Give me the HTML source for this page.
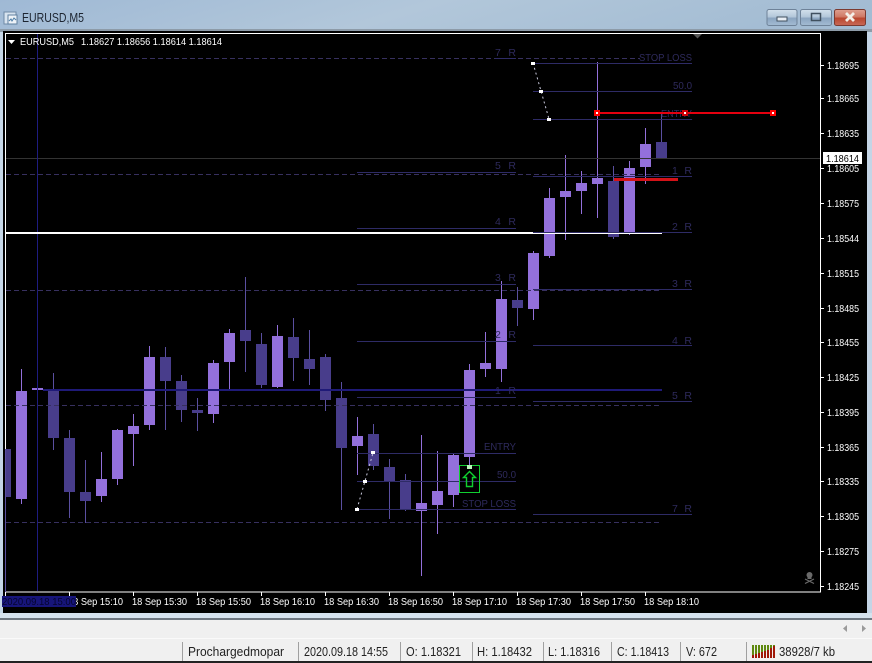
<!DOCTYPE html>
<html><head><meta charset="utf-8"><title>EURUSD,M5</title>
<style>
html,body{margin:0;padding:0;width:872px;height:663px;overflow:hidden;background:#f0f0f0}
svg{display:block;font-family:"Liberation Sans",sans-serif}
.w{fill:#fff;font-size:10.5px}
.f{fill:#2e2a5c;font-size:10.5px;text-anchor:end}
.s{fill:#222;font-size:12.5px}
</style></head><body>
<svg width="872" height="663" viewBox="0 0 872 663" xmlns="http://www.w3.org/2000/svg">
<defs>
<linearGradient id="tb" x1="0" y1="0" x2="1" y2="0.12"><stop offset="0" stop-color="#9fb9d5"/><stop offset=".5" stop-color="#b2c7da"/><stop offset="1" stop-color="#a3bcd3"/></linearGradient>
<linearGradient id="bb" x1="0" y1="0" x2="0" y2="1"><stop offset="0" stop-color="#d3e0ec"/><stop offset=".45" stop-color="#b4c8da"/><stop offset=".55" stop-color="#8ba5c0"/><stop offset="1" stop-color="#a4bcd4"/></linearGradient>
<linearGradient id="rb" x1="0" y1="0" x2="0" y2="1"><stop offset="0" stop-color="#dfa090"/><stop offset=".45" stop-color="#cf7a66"/><stop offset=".55" stop-color="#b9472f"/><stop offset="1" stop-color="#c96a58"/></linearGradient>
</defs>
<rect width="872" height="663" fill="#f0f0f0"/>
<rect width="872" height="32" fill="url(#tb)"/>
<rect y="29" width="872" height="3" fill="#8d9ba8"/>
<rect y="32" width="872" height="587" fill="#c4d5e6"/>
<rect x="3" y="31" width="864" height="582" fill="#000"/>
<rect x="0" y="613" width="872" height="5" fill="#d5e2ee"/>
<rect x="0" y="618" width="872" height="2" fill="#6d7680"/>
<rect x="0" y="620" width="872" height="19" fill="#f0f0f0"/>
<rect x="0" y="638" width="872" height="1" fill="#fafafa"/>
<rect x="0" y="661" width="872" height="2" fill="#222"/>

<!-- title icon -->
<g>
<rect x="4" y="12" width="12" height="12" fill="#d8e4f0" stroke="#6f8aa6"/>
<rect x="8" y="15" width="9" height="9" fill="#eef3f8" stroke="#5f7f9f"/>
<path d="M9 21l2-2 1 2 2-3 2 2" fill="none" stroke="#4f7fa8"/>
</g>
<text x="22" y="22" font-size="12.5" fill="#1c2430" textLength="62" lengthAdjust="spacingAndGlyphs">EURUSD,M5</text>

<!-- window buttons -->
<rect x="767" y="9.500" width="30" height="16" rx="2" fill="url(#bb)" stroke="#6e8298"/>
<rect x="777" y="17" width="10" height="4" fill="#e8eef4" stroke="#40505f"/>
<rect x="800.500" y="9.500" width="31" height="16" rx="2" fill="url(#bb)" stroke="#6e8298"/>
<rect x="811.500" y="13.500" width="9" height="7" fill="none" stroke="#40505f" stroke-width="1.500"/>
<rect x="834.500" y="9.500" width="31" height="16" rx="2" fill="url(#rb)" stroke="#7c3a30"/>
<path d="M846 13l8 8M854 13l-8 8" stroke="#f4efe8" stroke-width="2.800"/>

<!-- chart frame -->
<path d="M5.500 592V33.500H820.500V592H5" fill="none" stroke="#fff" shape-rendering="crispEdges"/>

<!-- wicks light -->
<path shape-rendering="crispEdges" fill="none" stroke="#9370db" d="M21.500 369V504M37.500 388V391M101.500 452V502M117.500 429V485M133.500 414V466M149.500 346V430M213.500 360V423M229.500 329V390M277.500 325V388M357.500 417V475M421.500 435V576M437.500 451V534M453.500 453V507M469.500 364V465M485.500 332V377M501.500 281V382M533.500 251V320M549.500 188V258M565.500 155V240M581.500 171V214M597.500 62V218M629.500 161V235M645.500 128V184"/>
<!-- wicks dark -->
<path shape-rendering="crispEdges" fill="none" stroke="#5a4fa0" d="M5.500 449V592M53.500 373V450M69.500 430V518M85.500 460V523M165.500 347V430M181.500 375V422M197.500 398V431M245.500 277V372M261.500 333V388M293.500 318V381M309.500 330V385M325.500 354V411M341.500 382V510M373.500 424V470M389.500 459V519M405.500 474V511M517.500 287V326M613.500 166V239M661.500 112V159"/>
<!-- bodies dark -->
<path shape-rendering="crispEdges" fill="#483d8b" d="M6 449h5v48h-5zM48 391h11v47h-11zM64 438h11v54h-11zM80 492h11v9h-11zM160 357h11v24h-11zM176 381h11v29h-11zM192 410h11v3h-11zM240 330h11v11h-11zM256 344h11v41h-11zM288 337h11v21h-11zM304 359h11v10h-11zM320 357h11v43h-11zM336 398h11v50h-11zM368 434h11v32h-11zM384 467h11v15h-11zM400 480h11v29h-11zM512 300h11v8h-11zM608 181h11v56h-11zM656 142h11v17h-11z"/>
<!-- bodies light -->
<path shape-rendering="crispEdges" fill="#9370db" d="M16 391h11v108h-11zM32 388h11v2h-11zM96 479h11v17h-11zM112 430h11v49h-11zM128 426h11v8h-11zM144 357h11v68h-11zM208 363h11v51h-11zM224 333h11v29h-11zM272 336h11v51h-11zM352 436h11v10h-11zM416 503h11v8h-11zM432 491h11v14h-11zM448 455h11v40h-11zM464 370h11v87h-11zM480 363h11v6h-11zM496 299h11v70h-11zM528 253h11v56h-11zM544 198h11v58h-11zM560 191h11v6h-11zM576 183h11v8h-11zM592 178h11v6h-11zM624 168h11v66h-11zM640 144h11v23h-11z"/>

<!-- dashed horizontals -->
<g fill="none" stroke="#37305f" stroke-dasharray="5 3" shape-rendering="crispEdges">
<path d="M6 58.500H640"/>
<path d="M6 174.500H662"/>
<path d="M6 290.500H662"/>
<path d="M6 405.500H662"/>
<path d="M6 522.500H662"/>
</g>
<!-- current price line -->
<path d="M6 158.500H820" stroke="#333333" shape-rendering="crispEdges"/>
<!-- vertical crosshair + blue line -->
<path d="M37.500 34V591" stroke="#1e1c80" shape-rendering="crispEdges"/>
<rect x="43" y="389" width="619" height="2" fill="#1f1a78"/>
<!-- white line -->
<rect x="6" y="232" width="656" height="2" fill="#fff"/>

<!-- fib left -->
<path fill="none" stroke="#2e2b66" shape-rendering="crispEdges" d="M357 172.500H516M357 228.500H516M357 284.500H516M357 341.500H516M357 397.500H516M357 453.500H516M357 481.500H516M357 509.500H516M495 58.500H516"/>
<!-- fib right -->
<path fill="none" stroke="#2e2b66" shape-rendering="crispEdges" d="M533 63.500H692M533 91.500H692M533 119.500H692M533 176.500H692M533 232.500H692M533 289.500H692M533 345.500H692M533 401.500H692M533 514.500H692"/>
<g class="labels">
<text class="f" x="516" y="56" textLength="21" lengthAdjust="spacing">7  R</text>
<text class="f" x="516" y="169" textLength="21" lengthAdjust="spacing">5  R</text>
<text class="f" x="516" y="225" textLength="21" lengthAdjust="spacing">4  R</text>
<text class="f" x="516" y="281" textLength="21" lengthAdjust="spacing">3  R</text>
<text class="f" x="516" y="338" textLength="21" lengthAdjust="spacing">2  R</text>
<text class="f" x="516" y="394" textLength="21" lengthAdjust="spacing">1  R</text>
<text class="f" x="516" y="450" textLength="32" lengthAdjust="spacingAndGlyphs">ENTRY</text>
<text class="f" x="516" y="478" textLength="19" lengthAdjust="spacingAndGlyphs">50.0</text>
<text class="f" x="516" y="507" textLength="54" lengthAdjust="spacingAndGlyphs">STOP LOSS</text>
<text class="f" x="692" y="61" textLength="53" lengthAdjust="spacingAndGlyphs">STOP LOSS</text>
<text class="f" x="692" y="89" textLength="19" lengthAdjust="spacingAndGlyphs">50.0</text>
<text class="f" x="692" y="117" textLength="31" lengthAdjust="spacingAndGlyphs">ENTRY</text>
<text class="f" x="692" y="174" textLength="20" lengthAdjust="spacing">1  R</text>
<text class="f" x="692" y="230" textLength="20" lengthAdjust="spacing">2  R</text>
<text class="f" x="692" y="287" textLength="20" lengthAdjust="spacing">3  R</text>
<text class="f" x="692" y="344" textLength="20" lengthAdjust="spacing">4  R</text>
<text class="f" x="692" y="399" textLength="20" lengthAdjust="spacing">5  R</text>
<text class="f" x="692" y="512" textLength="20" lengthAdjust="spacing">7  R</text>
</g>

<!-- dotted trend lines -->
<path d="M357 509L373 453M533 63L549 119" stroke="#c8c8dc" stroke-dasharray="2 3" fill="none"/>
<g fill="#fff" shape-rendering="crispEdges">
<rect x="355" y="508" width="4" height="3"/><rect x="363" y="480" width="4" height="3"/><rect x="371" y="451" width="4" height="3"/>
<rect x="531" y="62" width="4" height="3"/><rect x="539" y="90" width="4" height="3"/><rect x="547" y="118" width="4" height="3"/>
</g>

<!-- red lines -->
<rect x="597" y="112" width="176" height="2" fill="#e4000f"/>
<rect x="614" y="178" width="64" height="3" fill="#d31218"/>
<g shape-rendering="crispEdges">
<rect x="594" y="110" width="6" height="6" fill="#f00"/><rect x="596" y="112" width="2" height="2" fill="#fff"/>
<rect x="682" y="110" width="6" height="6" fill="#d0000a"/><rect x="684" y="112" width="2" height="2" fill="#fff"/>
<rect x="770" y="110" width="6" height="6" fill="#f00"/><rect x="772" y="112" width="2" height="2" fill="#fff"/>
</g>

<!-- buy arrow -->
<rect x="459.500" y="465.500" width="20" height="27" fill="none" stroke="#10d030" stroke-width="1.400" shape-rendering="crispEdges"/>
<path d="M469.500 471.500L475.500 477.500H472.500V486.500H466.500V477.500H463.500Z" fill="none" stroke="#10d030" stroke-width="1.400"/>
<rect x="467" y="465" width="5" height="4" fill="#b8f8b8"/>

<!-- legend -->
<path d="M8 40h7l-3.500 4z" fill="#fff"/>
<text class="w" x="20" y="45" textLength="54" lengthAdjust="spacingAndGlyphs">EURUSD,M5</text>
<text class="w" x="81" y="45" textLength="141" lengthAdjust="spacingAndGlyphs">1.18627 1.18656 1.18614 1.18614</text>

<!-- small triangle -->
<path d="M693 34h9l-4.500 4.500z" fill="#555"/>

<!-- price axis -->
<path stroke="#fff" shape-rendering="crispEdges" d="M821 65.500h3M821 98.500h3M821 133.500h3M821 168.500h3M821 203.500h3M821 238.500h3M821 273.500h3M821 308.500h3M821 342.500h3M821 377.500h3M821 412.500h3M821 447.500h3M821 481.500h3M821 516.500h3M821 551.500h3M821 586.500h3"/>
<g class="w">
<text x="827" y="69" textLength="32" lengthAdjust="spacingAndGlyphs">1.18695</text>
<text x="827" y="102" textLength="32" lengthAdjust="spacingAndGlyphs">1.18665</text>
<text x="827" y="137" textLength="32" lengthAdjust="spacingAndGlyphs">1.18635</text>
<text x="827" y="172" textLength="32" lengthAdjust="spacingAndGlyphs">1.18605</text>
<text x="827" y="207" textLength="32" lengthAdjust="spacingAndGlyphs">1.18575</text>
<text x="827" y="242" textLength="32" lengthAdjust="spacingAndGlyphs">1.18544</text>
<text x="827" y="277" textLength="32" lengthAdjust="spacingAndGlyphs">1.18515</text>
<text x="827" y="312" textLength="32" lengthAdjust="spacingAndGlyphs">1.18485</text>
<text x="827" y="346" textLength="32" lengthAdjust="spacingAndGlyphs">1.18455</text>
<text x="827" y="381" textLength="32" lengthAdjust="spacingAndGlyphs">1.18425</text>
<text x="827" y="416" textLength="32" lengthAdjust="spacingAndGlyphs">1.18395</text>
<text x="827" y="451" textLength="32" lengthAdjust="spacingAndGlyphs">1.18365</text>
<text x="827" y="485" textLength="32" lengthAdjust="spacingAndGlyphs">1.18335</text>
<text x="827" y="520" textLength="32" lengthAdjust="spacingAndGlyphs">1.18305</text>
<text x="827" y="555" textLength="32" lengthAdjust="spacingAndGlyphs">1.18275</text>
<text x="827" y="590" textLength="32" lengthAdjust="spacingAndGlyphs">1.18245</text>
</g>
<rect x="823" y="152" width="39" height="12" fill="#fff"/>
<text x="826" y="162" font-size="10.5" fill="#000" textLength="33" lengthAdjust="spacingAndGlyphs">1.18614</text>

<!-- time axis -->
<path stroke="#fff" shape-rendering="crispEdges" d="M5.500 592v4M69.500 592v4M133.500 592v4M197.500 592v4M261.500 592v4M325.500 592v4M389.500 592v4M453.500 592v4M517.500 592v4M581.500 592v4M645.500 592v4"/>
<g class="w">
<text x="68" y="605" textLength="55" lengthAdjust="spacingAndGlyphs">18 Sep 15:10</text>
<text x="132" y="605" textLength="55" lengthAdjust="spacingAndGlyphs">18 Sep 15:30</text>
<text x="196" y="605" textLength="55" lengthAdjust="spacingAndGlyphs">18 Sep 15:50</text>
<text x="260" y="605" textLength="55" lengthAdjust="spacingAndGlyphs">18 Sep 16:10</text>
<text x="324" y="605" textLength="55" lengthAdjust="spacingAndGlyphs">18 Sep 16:30</text>
<text x="388" y="605" textLength="55" lengthAdjust="spacingAndGlyphs">18 Sep 16:50</text>
<text x="452" y="605" textLength="55" lengthAdjust="spacingAndGlyphs">18 Sep 17:10</text>
<text x="516" y="605" textLength="55" lengthAdjust="spacingAndGlyphs">18 Sep 17:30</text>
<text x="580" y="605" textLength="55" lengthAdjust="spacingAndGlyphs">18 Sep 17:50</text>
<text x="644" y="605" textLength="55" lengthAdjust="spacingAndGlyphs">18 Sep 18:10</text>
</g>
<rect x="2" y="596" width="74" height="11" fill="#17157a"/>
<text x="2" y="605" font-size="10.5" fill="#050530" textLength="74" lengthAdjust="spacingAndGlyphs">2020.09.18 15:00</text>

<!-- skull -->
<g fill="#6a6a6a">
<circle cx="809.500" cy="575" r="3"/>
<rect x="807.500" y="577" width="4" height="2"/>
<path d="M805 579l9 4.500M814 579l-9 4.500" stroke="#6a6a6a" stroke-width="1.200"/>
</g>

<!-- scroll arrows -->
<path d="M847 625v7l-4-3.500z" fill="#9a9a9a"/>
<path d="M862 625v7l4-3.500z" fill="#9a9a9a"/>

<!-- status bar -->
<path stroke="#a0a0a0" shape-rendering="crispEdges" d="M182.500 642v19M298.500 642v19M400.500 642v19M472.500 642v19M543.500 642v19M611.500 642v19M680.500 642v19M746.500 642v19"/>
<g class="s">
<text x="188" y="656" textLength="96" lengthAdjust="spacingAndGlyphs">Prochargedmopar</text>
<text x="304" y="656" textLength="84" lengthAdjust="spacingAndGlyphs">2020.09.18 14:55</text>
<text x="406" y="656" textLength="55" lengthAdjust="spacingAndGlyphs">O: 1.18321</text>
<text x="477" y="656" textLength="55" lengthAdjust="spacingAndGlyphs">H: 1.18432</text>
<text x="548" y="656" textLength="52" lengthAdjust="spacingAndGlyphs">L: 1.18316</text>
<text x="617" y="656" textLength="52" lengthAdjust="spacingAndGlyphs">C: 1.18413</text>
<text x="686" y="656" textLength="31" lengthAdjust="spacingAndGlyphs">V: 672</text>
<text x="779" y="656" textLength="56" lengthAdjust="spacingAndGlyphs">38928/7 kb</text>
</g>
<!-- connection bars -->
<g shape-rendering="crispEdges">
<path fill="#5f8a10" d="M752 645h2v13h-2zM755 645h2v13h-2zM758 645h2v13h-2zM761 645h2v13h-2zM764 645h2v13h-2zM767 645h2v13h-2zM770 645h2v13h-2zM773 645h2v13h-2z"/>
<path fill="#a01808" d="M752 655h2v3h-2zM755 654h2v4h-2zM758 653h2v5h-2zM761 652h2v6h-2zM764 651h2v7h-2zM767 650h2v8h-2zM770 648h2v10h-2zM773 646h2v12h-2z"/>
</g>
</svg>
</body></html>
